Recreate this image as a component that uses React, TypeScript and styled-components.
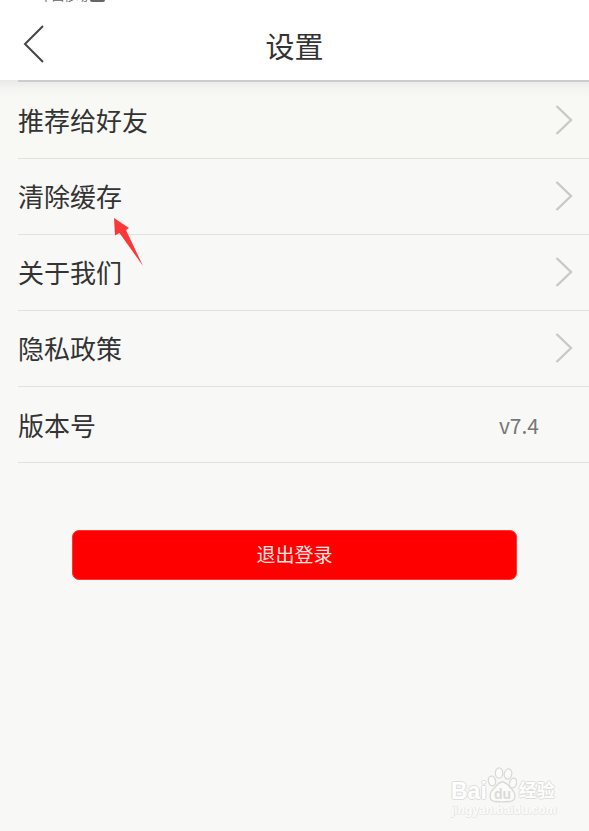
import React from "react";
import styled, { createGlobalStyle } from "styled-components";

const GlobalStyle = createGlobalStyle`
  *, *::before, *::after { box-sizing: border-box; }
  body {
    margin: 0;
    background: #f8f8f6;
    color: #333;
    font-family: "Noto Sans CJK SC", "Noto Sans", sans-serif;
  }
  button { font-family: inherit; color: inherit; border: 0; background: none; padding: 0; cursor: pointer; }
`;

const Page = styled.div`
  position: relative;
  min-height: 100vh;
  overflow: hidden;
`;

const TopArea = styled.div`
  background: #fff;
`;

const StatusBar = styled.div`
  display: flex;
  align-items: flex-end;
  gap: 2px;
  height: 3px;
  padding-left: 40px;
  overflow: hidden;
  color: #666;
  font-size: 12px;
  line-height: 14px;
`;

const NetworkBadge = styled.span`
  width: 15px;
  height: 12px;
  margin-bottom: 1px;
  border-radius: 2px;
  background: #666;
`;

const Header = styled.header`
  display: grid;
  grid-template-columns: 72px 1fr 72px;
  align-items: center;
  height: 77px;
`;

const BackButton = styled.button`
  display: flex;
  align-items: center;
  height: 60px;
  padding-left: 22px;
  padding-bottom: 0;
  margin-top: 5px;
`;

const Title = styled.h1`
  margin: 0;
  padding-top: 7px;
  text-align: center;
  font-size: 29px;
  line-height: 40px;
  font-weight: 400;
`;

const List = styled.ul`
  margin: 0;
  padding: 3px 0 0;
  list-style: none;
  background:
    linear-gradient(#ccc, #ccc) 18px 0 / 100% 2px no-repeat,
    linear-gradient(#e9e9e8, #f3f3f2 8px, #f8f8f600 18px) 0 0 / 100% 18px no-repeat,
    linear-gradient(#f8f9f4, #f8f9f4) 0 0 / 100% 78px no-repeat;
`;

const Item = styled.li`
  position: relative;
  margin-left: 18px;
  border-bottom: 1px solid #e1e1e0;
`;

const rowLayout = `
  display: flex;
  align-items: center;
  justify-content: space-between;
  width: 100%;
  height: 75px;
  padding-bottom: 2px;
  font-size: 26px;
  line-height: 40px;
  text-align: left;
`;

const LinkRow = styled.button`
  ${rowLayout}
  padding-right: 16px;
`;

const InfoRow = styled.div`
  ${rowLayout}
  padding-right: 50px;
  padding-bottom: 0;
`;

const Version = styled.span`
  color: #777;
  font-size: 21px;
`;

const Pointer = styled.svg`
  position: absolute;
  left: 95px;
  top: 58px;
  z-index: 1;
  pointer-events: none;
`;

const Actions = styled.div`
  padding: 67px 72px 0;
`;

const LogoutButton = styled.button`
  display: block;
  width: 100%;
  height: 50px;
  padding-bottom: 2px;
  border: 1px solid #f33;
  border-radius: 7px;
  background: #f00;
  color: #ffe3e0;
  font-size: 19px;
  line-height: 28px;
`;

const Watermark = styled.div`
  position: absolute;
  right: 32px;
  bottom: 14px;
  width: 106px;
  color: #fff;
  font-family: "Liberation Sans", "Noto Sans CJK SC", sans-serif;
  font-weight: 700;
  text-shadow: 1px 0 #dededd, -1px 0 #dededd, 0 1px #dededd, 0 -1px #dededd;
`;

const Brand = styled.div`
  display: flex;
  align-items: flex-end;
  height: 36px;
  font-size: 23px;
  line-height: 24px;
`;

const BrandCn = styled.span`
  margin-left: 2px;
  font-size: 18px;
`;

const Site = styled.div`
  color: #fcfcfb;
  font-size: 12px;
  line-height: 14px;
  text-shadow: 1px 0 #e6e6e5, 0 1px #e6e6e5;
`;

const PawIcon = styled.svg`
  text-shadow: none;
`;

const Chevron = () => (
  <svg width="18" height="32" viewBox="0 0 18 32" fill="none" stroke="#c9c9c8" strokeWidth="2.4" aria-hidden="true">
    <path d="M1.5 2L16 16L1.5 30" />
  </svg>
);

const Paw = () => (
  <PawIcon width="30" height="36" viewBox="0 0 30 36" fill="#fbfbfa" stroke="#d9d9d8" strokeWidth="1.3" aria-hidden="true">
    <ellipse cx="5" cy="14" rx="3.6" ry="5" transform="rotate(-12 5 14)" />
    <ellipse cx="12" cy="6" rx="3.7" ry="5.2" />
    <ellipse cx="21" cy="7" rx="3.7" ry="5.2" transform="rotate(12 21 7)" />
    <ellipse cx="26" cy="16" rx="3.5" ry="5" transform="rotate(15 26 16)" />
    <path d="M15.5 15C11 15 10 19 6.5 22C2 26 1.5 34 8 34.5C12 35 19 35 23 34.5C29.5 34 29 26 24.5 22C21 19 20 15 15.5 15Z" />
    <text x="15.5" y="32" textAnchor="middle" fontSize="14" fill="#dadad9" stroke="none">du</text>
  </PawIcon>
);

const links = ["推荐给好友", "清除缓存", "关于我们", "隐私政策"];

export default function App() {
  return (
    <Page>
      <GlobalStyle />
      <TopArea>
        <StatusBar>
          <span>中国移动</span>
          <NetworkBadge />
        </StatusBar>
        <Header>
          <BackButton aria-label="返回">
            <svg width="24" height="40" viewBox="0 0 24 40" fill="none" stroke="#444" strokeWidth="2" aria-hidden="true">
              <path d="M21 2L3 20L21 38" />
            </svg>
          </BackButton>
          <Title>设置</Title>
        </Header>
      </TopArea>
      <main>
        <List>
          {links.map((label) => (
            <Item key={label}>
              <LinkRow>
                <span>{label}</span>
                <Chevron />
              </LinkRow>
              {label === "清除缓存" && (
                <Pointer width="31" height="50" viewBox="0 0 31 50" aria-hidden="true">
                  <path d="M1 1L16 11L13 13L30 49L6.5 16L2 18.5Z" fill="#fa3838" />
                </Pointer>
              )}
            </Item>
          ))}
          <Item>
            <InfoRow>
              <span>版本号</span>
              <Version>v7.4</Version>
            </InfoRow>
          </Item>
        </List>
        <Actions>
          <LogoutButton>退出登录</LogoutButton>
        </Actions>
      </main>
      <Watermark>
        <Brand>
          <span>Bai</span>
          <Paw />
          <BrandCn>经验</BrandCn>
        </Brand>
        <Site>jingyan.baidu.com</Site>
      </Watermark>
    </Page>
  );
}
